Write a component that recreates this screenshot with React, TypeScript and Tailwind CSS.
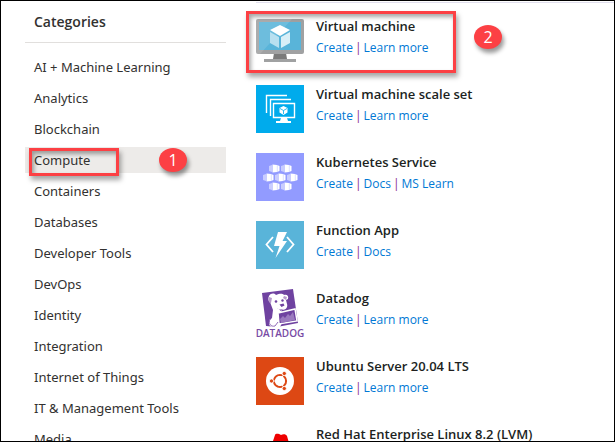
import type { ReactNode } from "react";

const categories = [
  "AI + Machine Learning",
  "Analytics",
  "Blockchain",
  "Compute",
  "Containers",
  "Databases",
  "Developer Tools",
  "DevOps",
  "Identity",
  "Integration",
  "Internet of Things",
  "IT & Management Tools",
  "Media",
];

function VirtualMachineIcon() {
  return (
    <svg viewBox="0 0 48 48" className="size-12" aria-hidden="true">
      <path d="M18 36h12l1 6h5v2H12v-2h5z" fill="#7a7a7a" />
      <path d="M8 42h32v3H8z" fill="#a0a1a2" />
      <rect y="2" width="48" height="35" rx="2" fill="#a0a1a2" />
      <path d="M3 5h42v28H3z" fill="#59b4d9" />
      <path d="M2 2h34L4 37H2a2 2 0 0 1-2-2V4a2 2 0 0 1 2-2z" fill="#fff" opacity=".12" />
      <path d="M24 8l10 5-10 6-10-6z" fill="#fff" />
      <path d="M14 15l9 5v11l-9-5z" fill="#b9e0f0" />
      <path d="M34 15l-9 5v11l9-5z" fill="#d9eff7" />
    </svg>
  );
}

function ScaleSetIcon() {
  return (
    <svg viewBox="0 0 48 48" className="size-12" aria-hidden="true">
      <path d="M0 0h48v48H0z" fill="#00abec" />
      <g fill="none" stroke="#fff" strokeWidth="1.4">
        <path d="M10.500 28V10.500H31M14.500 31V14.500H35" />
        <path d="M17.500 18.500h21v14h-21z" />
      </g>
      <path d="M25 33h6l1 3h3v2H20v-2h4z" fill="#fff" />
      <path d="M27.500 21l4 2v4.500l-4 2.500-4-2.500V23z" fill="#fff" />
      <path d="M24 23.500l3.500 2 3.500-2M27.500 25.500V29" fill="none" stroke="#00abec" strokeWidth=".8" />
    </svg>
  );
}

const pods = [
  [13, 11],
  [25, 11],
  [7, 20],
  [19, 20],
  [31, 20],
  [13, 29],
  [25, 29],
];

function KubernetesIcon() {
  return (
    <svg viewBox="0 0 48 48" className="size-12" aria-hidden="true">
      <path d="M0 0h48v48H0z" fill="#929bff" />
      {pods.map(([x, y]) => (
        <g key={`${x}-${y}`} transform={`translate(${x} ${y})`}>
          <path d="M0 2l3-1v7l-3-1z" fill="#c9cdff" />
          <path d="M3.500.500L8 1l2.500 1v5L8 8l-4.500.500z" fill="#fff" />
          <path d="M8.300 1v7" stroke="#c4c9ff" strokeWidth=".6" />
        </g>
      ))}
    </svg>
  );
}

function FunctionIcon() {
  return (
    <svg viewBox="0 0 48 48" className="size-12" aria-hidden="true">
      <path d="M0 0h48v48H0z" fill="#59b4d9" />
      <path d="M17 16l-6.500 7.500L17 31M31 16l6.500 7.500L31 31" fill="none" stroke="#fff" strokeWidth="1.800" />
      <path d="M22 11h9l-4.500 9H31L19.500 37l4-12H18z" fill="#fff" />
    </svg>
  );
}

function DatadogIcon() {
  return (
    <svg viewBox="0 0 48 48" className="size-12 overflow-visible" aria-hidden="true">
      <path d="M6 4l31-4 5 34-21 4-11-1z" fill="#6f42a0" />
      <path d="M13 7c2-3 5-3 7-1 3-1 6-2 8 0 3-1 5 1 4 4l-2 1 1 4c1 3-1 6-5 6l-1 3 3 6-4 8h-8c-4-1-4-6 0-9l1-8-3-8c-2-1-2-4-1-6z" fill="#fff" />
      <path d="M13 8l3 1-1 5c-2 0-3-2-2-6zM28 7l3 1-1 3-3-2z" fill="#b79acc" />
      <circle cx="20" cy="12.500" r="1.300" fill="#6f42a0" />
      <circle cx="26.500" cy="11.500" r="1.200" fill="#6f42a0" />
      <path d="M23.500 15.500l4-1 1 2-3 1.500zM21 19c2 2 5 2 7 0l-3 3z" fill="#6f42a0" />
      <path d="M22 24l17-4 2 12-18 3z" fill="#6f42a0" stroke="#fff" strokeWidth="1.500" />
      <path d="M24 30l3-3 2 2 3-4 2 2 3-4 1 4 1 4-14 3z" fill="#9b7abf" />
      <path d="M14 30c-2 5 1 8 5 7l3-4" fill="none" stroke="#8f69b8" />
      <text
        x="24"
        y="48"
        textAnchor="middle"
        className="fill-[#774aa4] font-['Open_Sans',sans-serif] text-[10px] font-semibold"
      >
        DATADOG
      </text>
    </svg>
  );
}

function UbuntuIcon() {
  return (
    <svg viewBox="0 0 48 48" className="size-12" aria-hidden="true">
      <path d="M0 0h48v48H0z" fill="#dd4814" />
      <circle cx="24" cy="24" r="14" fill="#fff" />
      <circle cx="24" cy="24" r="6" fill="none" stroke="#dd4814" strokeWidth="2.200" />
      <path d="M24 24H14M24 24l5-8.700M24 24l5 8.700" stroke="#fff" strokeWidth="1" />
      <circle cx="24" cy="24" r="4.900" fill="#fff" />
      <g fill="#dd4814" stroke="#fff" strokeWidth=".8">
        <circle cx="15.500" cy="24" r="2.100" />
        <circle cx="28.300" cy="16.500" r="2.100" />
        <circle cx="28.300" cy="31.500" r="2.100" />
      </g>
    </svg>
  );
}

function RedHatIcon() {
  return (
    <svg viewBox="0 0 48 48" className="size-12" aria-hidden="true">
      <path d="M19 10c1-2 4-1 6 0 2-1 5-1 6 1l2 7c5 2 8 7 2 8-7 1-20-3-23-7-1-3 2-3 5-3z" fill="#e00" />
      <path d="M17 16c2 3 10 5 16 4v2c-6 1-15-1-17-4z" fill="#111" />
    </svg>
  );
}

type Product = { name: string; icon: ReactNode; links: string[]; step?: number };

const products: Product[] = [
  { name: "Virtual machine", icon: <VirtualMachineIcon />, links: ["Create", "Learn more"], step: 2 },
  { name: "Virtual machine scale set", icon: <ScaleSetIcon />, links: ["Create", "Learn more"] },
  { name: "Kubernetes Service", icon: <KubernetesIcon />, links: ["Create", "Docs", "MS Learn"] },
  { name: "Function App", icon: <FunctionIcon />, links: ["Create", "Docs"] },
  { name: "Datadog", icon: <DatadogIcon />, links: ["Create", "Learn more"] },
  { name: "Ubuntu Server 20.04 LTS", icon: <UbuntuIcon />, links: ["Create", "Learn more"] },
  { name: "Red Hat Enterprise Linux 8.2 (LVM)", icon: <RedHatIcon />, links: ["Create", "Learn more"] },
];

function StepBadge({ value }: { value: number }) {
  return (
    <span className="flex h-6 w-7 items-center justify-center rounded-[50%] bg-[#fc4044] text-base leading-6 text-white shadow-[2px_4px_4px_rgba(0,0,0,0.4)]">
      {value}
    </span>
  );
}

const frame =
  "pointer-events-none absolute border-3 border-[#fc4044] shadow-[2px_4px_5px_rgba(0,0,0,0.35),inset_2px_3px_4px_rgba(0,0,0,0.35)]";

export default function App() {
  return (
    <div className="flex h-screen overflow-hidden border border-black bg-white font-['Open_Sans','Noto_Sans',sans-serif] text-[13px] text-[#323130]">
      <nav aria-labelledby="categories" className="ml-6 w-[201px] shrink-0 pt-[9px]">
        <h2 id="categories" className="border-b border-[#e1dfdd] pb-2 pl-[9px] text-sm leading-6 font-semibold">
          Categories
        </h2>
        <ul className="mt-[11px] flex flex-col gap-[5px]">
          {categories.map((name) => (
            <li key={name} className="relative">
              <button
                type="button"
                className={`block h-[26px] w-full pl-[9px] text-left font-['Noto_Sans','Open_Sans',sans-serif] leading-[26px] ${name === "Compute" ? "bg-[#edebe9]" : ""}`}
              >
                {name}
              </button>
              {name === "Compute" && (
                <>
                  <span className={`${frame} top-px left-1 h-7 w-[90px]`} />
                  <span className="absolute top-px left-[134px]">
                    <StepBadge value={1} />
                  </span>
                </>
              )}
            </li>
          ))}
        </ul>
      </nav>
      <main className="ml-[30px] flex-1 pt-px">
        <ul className="flex flex-col gap-5 border-t border-[#e1dfee] pt-[14px]">
          {products.map(({ name, icon, links, step }) => (
            <li key={name} className="relative flex gap-3">
              {icon}
              <div className="text-[#201f1e]">
                <h3 className="leading-[18px] font-semibold">{name}</h3>
                <p className="mt-1 flex text-xs leading-[18px]">
                  {links.map((link, i) => (
                    <span key={link} className={i > 0 ? "ml-0.5 flex gap-0.5" : "flex"}>
                      {i > 0 && <span className="text-[#8a2c8c]">|</span>}
                      <a href="#" className="text-[#0078d4]">
                        {link}
                      </a>
                    </span>
                  ))}
                </p>
              </div>
              {step && (
                <>
                  <span className={`${frame} -top-1.5 -left-2.5 h-[62px] w-[210px]`} />
                  <span className="absolute top-2 left-[218px]">
                    <StepBadge value={step} />
                  </span>
                </>
              )}
            </li>
          ))}
        </ul>
      </main>
    </div>
  );
}
